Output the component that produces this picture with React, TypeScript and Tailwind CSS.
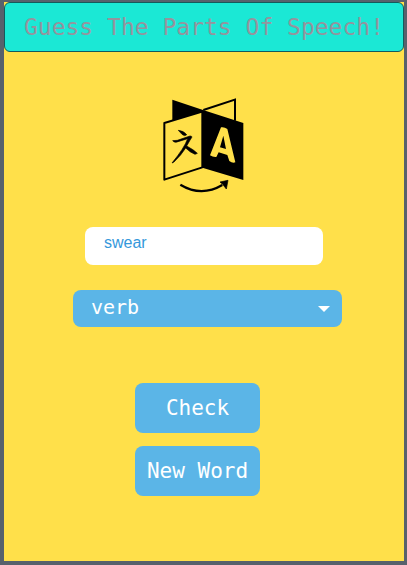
import { useState } from "react";

const MONO = "font-['DejaVu_Sans_Mono','Liberation_Mono',monospace]";

function TranslateLogo() {
  return (
    <svg className="h-24 w-[82px]" viewBox="27 24 246 288" role="img" aria-label="Translate">
      <path d="M55 29L147 60L268 99V270L145 233V65L90 82L55 91Z" fill="#000" />
      <path d="M148 60L243 29V92" fill="none" stroke="#000" strokeWidth="6" />
      <path d="M31 99L145 65V232L31 269Z" fill="#ffe04a" stroke="#000" strokeWidth="6" strokeLinejoin="round" />
      <path
        fill="#ffe04a"
        fillRule="evenodd"
        d="M201 112Q211 110 220 117L244 217Q235 220 226 213L220 195L194 187L187 201Q177 202 168 196ZM208 137L198 172L216 177Z"
      />
      <g fill="#000" stroke="#000" strokeWidth="2" strokeLinejoin="round">
        <path d="M73 121Q88 122 98 134Q92 140 84 133Z" />
        <path d="M56 152Q62 160 72 155L101 146Q91 174 54 219L60 216Q82 195 95 174Q108 187 123 193L130 190Q119 179 98 168L110 147Q118 138 108 138L70 151Z" />
      </g>
      <path d="M79 284Q142 322 205 285" fill="none" stroke="#000" strokeWidth="7" />
      <path d="M222 271L198 276L206 283L217 297Z" fill="#000" stroke="#000" strokeWidth="2" />
    </svg>
  );
}

export default function App() {
  const [word, setWord] = useState("swear");
  const [part, setPart] = useState("verb");
  const button =
    "h-[50px] w-[125px] rounded-lg bg-[#5bb5e7] text-[21px] leading-6 font-medium text-white " + MONO;

  return (
    <div className="flex min-h-screen flex-col bg-[#57616c] pt-0.5 pr-[3px] pb-1 pl-1">
      <main className="flex grow flex-col items-center bg-[#ffe04a]">
        <header className="flex h-[50px] w-full items-center justify-center rounded-md border border-[#155a5c] bg-[#1be8d5]">
          <h1 className={"text-[23px] leading-6 whitespace-nowrap text-[#95949d] " + MONO}>
            Guess The Parts Of Speech!
          </h1>
        </header>
        <div className="mt-[46px]">
          <TranslateLogo />
        </div>
        <input
          aria-label="Word"
          value={word}
          onChange={(e) => setWord(e.target.value)}
          className="mt-[33px] h-[38px] w-[238px] rounded-lg bg-white pr-5 pb-[7px] pl-[19px] font-['Liberation_Sans',Arial,sans-serif] text-base text-[#3498db] outline-none"
        />
        <div className="relative mt-[25px] ml-[7px] w-[269px]">
          <select
            aria-label="Part of speech"
            value={part}
            onChange={(e) => setPart(e.target.value)}
            className={"block h-[37px] w-full appearance-none rounded-lg bg-[#5bb5e7] pr-10 pb-1 pl-[18px] text-xl text-white outline-none " + MONO}
          >
            <option>noun</option>
            <option>verb</option>
            <option>adjective</option>
            <option>adverb</option>
          </select>
          <svg className="pointer-events-none absolute top-4 right-3 h-1.5 w-3" viewBox="0 0 12 6" aria-hidden="true">
            <path d="M0 0H12L6 6Z" fill="#fff" />
          </svg>
        </div>
        <div className="mt-14 mr-[13px] flex flex-col gap-[13px]">
          <button type="button" className={button}>Check</button>
          <button type="button" className={button}>New Word</button>
        </div>
      </main>
    </div>
  );
}
